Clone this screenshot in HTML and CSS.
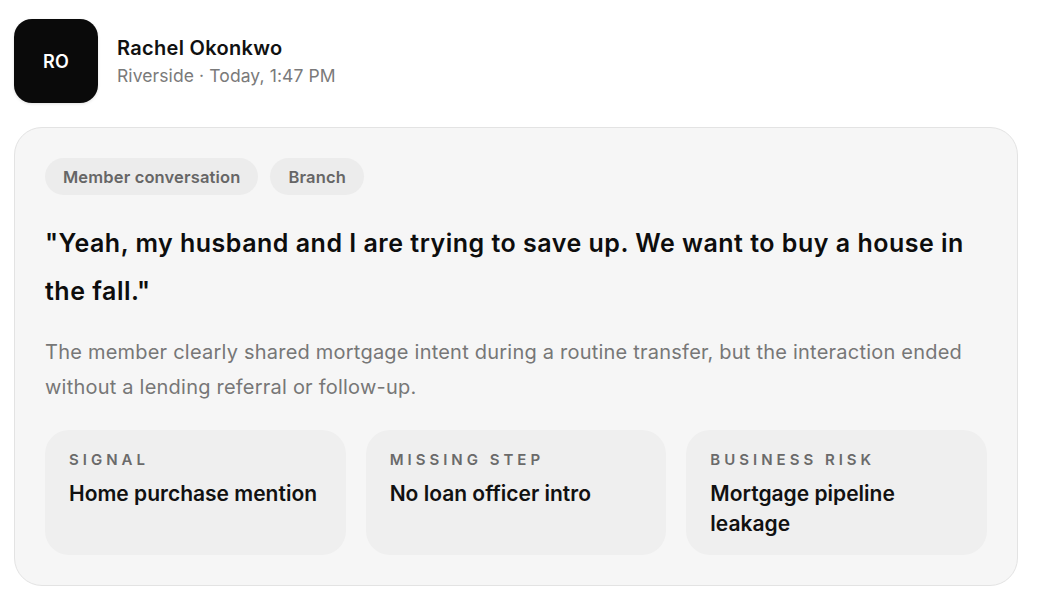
FILE: index.html
```html
<!DOCTYPE html>
<html lang="en">
<head>
<meta charset="utf-8">
<title>Rachel Okonkwo</title>
<link rel="stylesheet" href="styles.css">
</head>
<body>
<div class="page">
  <header class="head">
    <div class="avatar">RO</div>
    <div class="who">
      <div class="name">Rachel Okonkwo</div>
      <div class="meta">Riverside · Today, 1:47 PM</div>
    </div>
  </header>
  <section class="card">
    <div class="tags">
      <span class="tag">Member conversation</span>
      <span class="tag">Branch</span>
    </div>
    <p class="quote">"Yeah, my husband and I are trying to save up. We want to buy a house in the fall."</p>
    <p class="desc">The member clearly shared mortgage intent during a routine transfer, but the interaction ended without a lending referral or follow-up.</p>
    <div class="boxes">
      <div class="box">
        <div class="label">Signal</div>
        <div class="value">Home purchase mention</div>
      </div>
      <div class="box">
        <div class="label">Missing step</div>
        <div class="value">No loan officer intro</div>
      </div>
      <div class="box">
        <div class="label">Business risk</div>
        <div class="value">Mortgage pipeline leakage</div>
      </div>
    </div>
  </section>
</div>
</body>
</html>
```
FILE: styles.css
```css
* { box-sizing: border-box; }
html, body { margin: 0; padding: 0; background: #ffffff; }
body {
  font-family: Inter, "Noto Sans", "Liberation Sans", sans-serif;
  color: #0d0d0d;
}
.page {
  padding: 19px 20px 0 14px;
}
.head {
  display: flex;
  align-items: center;
  gap: 19px;
}
.avatar {
  width: 84px;
  height: 84px;
  border-radius: 18px;
  background: #0a0a0a;
  color: #ffffff;
  display: flex;
  align-items: center;
  justify-content: center;
  font-size: 18px;
  font-weight: 600;
  letter-spacing: 0.3px;
  box-shadow: 0 1px 3px rgba(0,0,0,0.12);
}
.who {
  display: flex;
  flex-direction: column;
  gap: 5px;
  margin-top: 1px;
}
.name {
  font-size: 20px;
  font-weight: 600;
  line-height: 24px;
  letter-spacing: 0.3px;
  color: #111;
}
.meta {
  font-size: 17.5px;
  line-height: 22px;
  letter-spacing: 0.1px;
  color: #7a7a7a;
}
.card {
  margin-top: 24px;
  width: 1004px;
  border: 1px solid #e3e3e3;
  border-radius: 28px;
  background: #f6f6f6;
  padding: 30px 30px 30px 30px;
}
.tags {
  display: flex;
  gap: 12px;
}
.tag {
  display: inline-flex;
  align-items: center;
  height: 37px;
  padding: 0 18px;
  border-radius: 999px;
  background: #ececec;
  color: #666;
  font-size: 16.5px;
  font-weight: 600;
  letter-spacing: 0.15px;
}
.quote {
  margin: 24px 0 0;
  font-size: 25px;
  line-height: 48px;
  font-weight: 600;
  letter-spacing: 0.5px;
  color: #0d0d0d;
}
.desc {
  margin: 20px 0 0;
  font-size: 20px;
  line-height: 35px;
  letter-spacing: 0.22px;
  color: #777;
}
.boxes {
  margin-top: 25px;
  display: grid;
  grid-template-columns: repeat(3, 1fr);
  gap: 20px;
}
.box {
  height: 125px;
  border-radius: 24px;
  background: #efefef;
  padding: 20px 24px;
}
.label {
  font-size: 15px;
  line-height: 20px;
  font-weight: 600;
  letter-spacing: 4px;
  text-transform: uppercase;
  color: #6a6a6a;
}
.value {
  margin-top: 9px;
  font-size: 21px;
  line-height: 30px;
  font-weight: 600;
  color: #111;
}
```
